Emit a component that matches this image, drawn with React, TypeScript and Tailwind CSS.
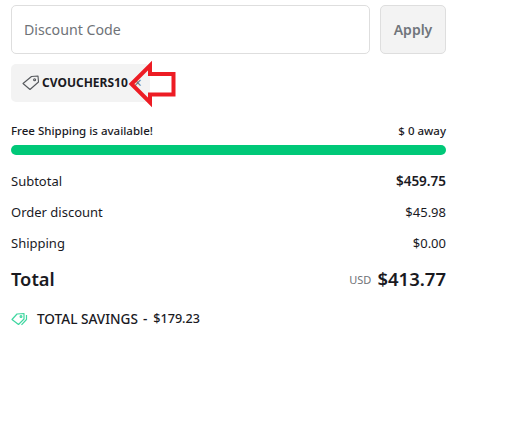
export default function App() {
  return (
    <div className="relative h-[436px] w-[520px] overflow-hidden bg-white pl-[11px] pt-[5px] text-[#1a1a1f]" style={{ fontFamily: '"Noto Sans", sans-serif' }}>
      <div className="w-[435px]">
        <div className="flex gap-[10px]">
          <div className="flex h-[49px] flex-1 items-center rounded-[5px] border border-[#dedede] px-3 text-[14.2px] text-[#6f7378]">Discount Code</div>
          <div className="flex h-[49px] w-[66px] items-center justify-center rounded-[5px] border border-[#dedede] bg-[#f3f3f3] text-[14px] font-semibold text-[#70757b]">Apply</div>
        </div>
        <div className="mt-[10px] flex h-[38px] w-[139px] items-center rounded-[5px] bg-[#f3f3f3] pl-[11px]">
          <svg width="18" height="18" viewBox="0 0 18 18" fill="none" stroke="#55585c" strokeWidth="1.1" strokeLinejoin="round">
            <path d="M1 9.5 L9.5 2.5 L16 2 L16.5 8 L8 15.5 Z" />
            <circle cx="12.6" cy="5.8" r="1" />
          </svg>
          <span className="ml-[2px] text-[12px] font-bold leading-none">CVOUCHERS10</span>
          <span className="ml-[6px] text-[14px] leading-none text-[#6f7378]">×</span>
        </div>
        <div className="mt-[21px] flex items-center justify-between text-[11.5px] font-medium leading-[16px]">
          <span>Free Shipping is available!</span>
          <span>$ 0 away</span>
        </div>
        <div className="mt-[6px] h-[10px] rounded-full bg-[#00c878]" />
        <div className="mt-[16px] flex h-[21px] items-center justify-between text-[13px]">
          <span>Subtotal</span>
          <span className="text-[13.5px] font-semibold">$459.75</span>
        </div>
        <div className="mt-[10px] flex h-[21px] items-center justify-between text-[13px]">
          <span>Order discount</span>
          <span>$45.98</span>
        </div>
        <div className="mt-[10px] flex h-[21px] items-center justify-between text-[13px]">
          <span>Shipping</span>
          <span>$0.00</span>
        </div>
        <div className="mt-[10px] flex h-[30px] items-center justify-between">
          <span className="text-[18.3px] font-semibold">Total</span>
          <span className="flex items-center">
            <span className="mr-[6px] mt-[3px] text-[11px] text-[#6f7378]">USD</span>
            <span className="text-[18.5px] font-semibold">$413.77</span>
          </span>
        </div>
        <div className="mt-[15px] flex h-[20px] items-center text-[13.6px] font-medium">
          <svg width="17" height="14" viewBox="0 0 17 14" fill="none" stroke="#3fd6a0" strokeWidth="1.2" strokeLinejoin="round" className="mr-[9px]">
            <path d="M1 7.5 L6 2 L13 1.5 L13 7 L7.5 12.5 Z" />
            <circle cx="10" cy="4.6" r="0.9" />
            <path d="M15.5 3 L15.5 7.5 L10.5 12.8" />
          </svg>
          <span>TOTAL SAVINGS</span>
          <span className="ml-[5px]">-</span>
          <span className="ml-[6px] text-[12.6px]">$179.23</span>
        </div>
      </div>
      <svg className="absolute left-[124px] top-[58px]" width="56" height="52" viewBox="0 0 56 52" fill="none" stroke="#ed1c24" strokeWidth="4">
        <path d="M7.5 26 L26 7.5 L26 16 L49.5 16 L49.5 36.5 L26 36.5 L26 44.5 Z" />
      </svg>
    </div>
  );
}
